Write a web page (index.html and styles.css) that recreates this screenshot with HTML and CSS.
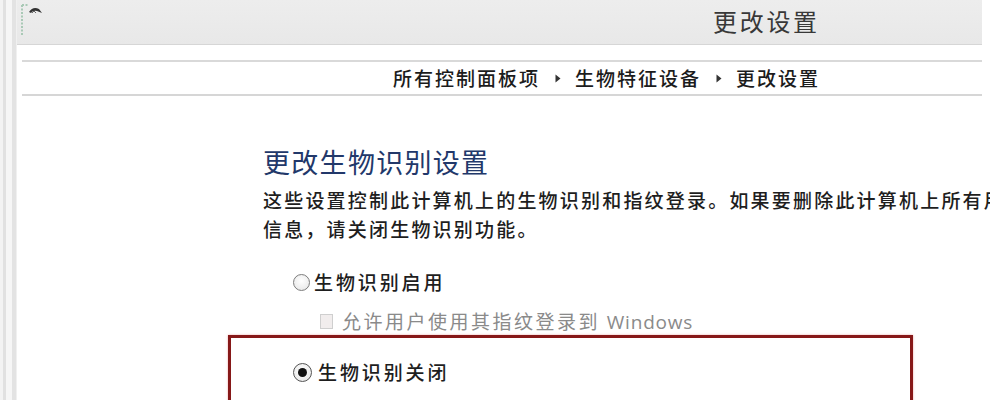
FILE: index.html
```html
<!DOCTYPE html>
<html lang="zh-CN">
<head>
<meta charset="utf-8">
<title>更改设置</title>
<link rel="stylesheet" href="styles.css">
</head>
<body>
<div class="window">
  <div class="frame-edge"></div>
  <div class="main">
    <div class="titlebar">
      <svg class="app-icon" width="28" height="38" viewBox="0 0 28 38">
        <path d="M4 5 H10 M4 5 V35" stroke="#a9c9b6" stroke-width="2" stroke-dasharray="2 1.5" fill="none"/>
        <path d="M11 12 Q15 6 21 9 L24 13 L19 11 Q15 10 13 13 Z" fill="#333"/>
        <path d="M14 13 L16 11 L18 13" stroke="#666" stroke-width="1" fill="none"/>
      </svg>
      <div class="title">更改设置</div>
    </div>
    <div class="addressbar">
      <span class="crumb">所有控制面板项</span>
      <svg class="sep" width="6" height="9" viewBox="0 0 6 9"><path d="M0.5 0.5 L5.5 4.5 L0.5 8.5 Z" fill="#333"/></svg>
      <span class="crumb">生物特征设备</span>
      <svg class="sep" width="6" height="9" viewBox="0 0 6 9"><path d="M0.5 0.5 L5.5 4.5 L0.5 8.5 Z" fill="#333"/></svg>
      <span class="crumb">更改设置</span>
    </div>
    <div class="content">
      <h1 class="heading">更改生物识别设置</h1>
      <p class="desc">这些设置控制此计算机上的生物识别和指纹登录。如果要删除此计算机上所有用户的指纹<br>信息，请关闭生物识别功能。</p>
      <div class="option">
        <span class="radio"></span>
        <span class="option-label">生物识别启用</span>
      </div>
      <div class="suboption">
        <span class="checkbox"></span>
        <span class="sub-label">允许用户使用其指纹登录到 <span class="latin">Windows</span></span>
      </div>
      <div class="highlight">
        <div class="option">
          <span class="radio checked"></span>
          <span class="option-label">生物识别关闭</span>
        </div>
      </div>
    </div>
  </div>
</div>
</body>
</html>
```
FILE: styles.css
```css
html, body {
  margin: 0;
  padding: 0;
  background: #ffffff;
}
body {
  font-family: "Noto Sans CJK SC", "Noto Sans", sans-serif;
  color: #222;
}
.window {
  display: flex;
  width: 990px;
  height: 400px;
  overflow: hidden;
  background: #fff;
}
.frame-edge {
  flex: none;
  width: 17px;
  background: linear-gradient(to right, #f3f3f3 0 3px, #e1e1e1 3px 6px, #f6f6f6 6px 12px, #e3e3e3 12px 16px, #f0f0f0 16px 17px);
}
.main {
  flex: 1;
  min-width: 0;
  display: flex;
  flex-direction: column;
}
.titlebar {
  flex: none;
  height: 44px;
  margin-right: 8px;
  background: linear-gradient(#ededed, #e8e8e8);
  border-bottom: 1px solid #d6d6d6;
  display: flex;
  align-items: flex-start;
}
.app-icon {
  flex: none;
  margin-left: 1px;
  margin-top: 0;
}
.title {
  margin-left: 667px;
  font-size: 24px;
  line-height: 42px;
  letter-spacing: 2.7px;
  color: #383838;
  white-space: nowrap;
}
.addressbar {
  flex: none;
  margin: 15px 8px 0 5px;
  height: 32px;
  border-top: 2px solid #d9d9d9;
  border-bottom: 2px solid #d6d6d6;
  display: flex;
  align-items: center;
  padding-left: 371px;
}
.crumb {
  font-size: 19px;
  font-weight: 500;
  letter-spacing: 2px;
  color: #1c1c1c;
  white-space: nowrap;
  line-height: 32px;
}
.sep {
  flex: none;
  margin: 0 14px 0 15px;
}
.content {
  padding-left: 246px;
  display: flex;
  flex-direction: column;
  align-items: flex-start;
}
.heading {
  margin: 50px 0 0 0;
  font-size: 27px;
  line-height: 32px;
  font-weight: normal;
  letter-spacing: 1.3px;
  color: #22386a;
  white-space: nowrap;
}
.desc {
  margin: 7px 0 0 0;
  font-size: 19px;
  font-weight: 500;
  line-height: 29px;
  letter-spacing: 2.2px;
  color: #1e1e1e;
  white-space: nowrap;
}
.option {
  margin-top: 27px;
  margin-left: 30px;
  height: 24px;
  display: flex;
  align-items: center;
}
.radio {
  flex: none;
  width: 15px;
  height: 15px;
  border: 1px solid #7d7d7d;
  border-radius: 50%;
  background: radial-gradient(circle at 50% 40%, #ffffff, #e4e4e4);
  margin-right: 4px;
  position: relative;
}
.radio.checked {
  border-color: #555;
  width: 17px;
  height: 17px;
  margin-right: 6px;
}
.radio.checked::after {
  content: "";
  position: absolute;
  left: 4px;
  top: 4px;
  width: 9px;
  height: 9px;
  border-radius: 50%;
  background: #111;
}
.option-label {
  font-size: 19px;
  font-weight: 500;
  line-height: 24px;
  letter-spacing: 2.9px;
  color: #1e1e1e;
  white-space: nowrap;
}
.suboption {
  margin-top: 15px;
  margin-left: 57px;
  height: 24px;
  display: flex;
  align-items: center;
}
.checkbox {
  flex: none;
  width: 11px;
  height: 13px;
  border: 1px solid #cfcfcf;
  background: #f1eded;
  margin-right: 9px;
}
.sub-label {
  font-size: 19px;
  line-height: 24px;
  letter-spacing: 2.5px;
  color: #8a8a8a;
  white-space: nowrap;
}
.latin {
  font-family: "Open Sans", "Noto Sans", sans-serif;
  font-size: 19px;
  letter-spacing: 0.8px;
}
.highlight {
  margin-top: 2px;
  margin-left: -35px;
  width: 685px;
  height: 100px;
  box-sizing: border-box;
  border: 3px solid #861818;
  box-shadow: 0 0 2px rgba(220, 80, 80, 0.5);
  padding: 0 0 0 62px;
}
.highlight .option {
  margin-top: 22px;
  margin-left: 0;
}
```
